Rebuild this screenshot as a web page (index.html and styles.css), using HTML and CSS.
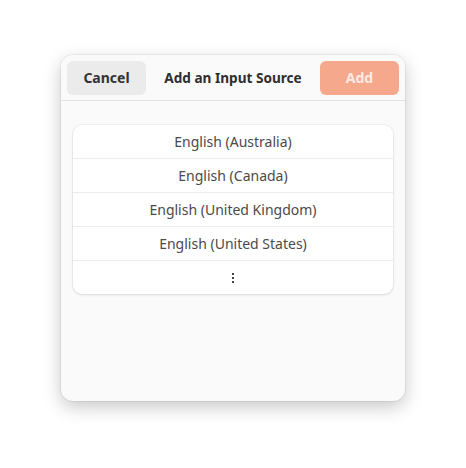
FILE: index.html
```html
<!DOCTYPE html>
<html>
<head>
<meta charset="utf-8">
<link rel="stylesheet" href="styles.css">
</head>
<body>
<div class="dialog">
  <div class="header">
    <button class="btn cancel">Cancel</button>
    <div class="title">Add an Input Source</div>
    <button class="btn add">Add</button>
  </div>
  <div class="content">
    <div class="list">
      <div class="row">English (Australia)</div>
      <div class="row">English (Canada)</div>
      <div class="row">English (United Kingdom)</div>
      <div class="row">English (United States)</div>
      <div class="row more">
        <svg width="4" height="12" viewBox="0 0 4 12"><rect x="1" y="1" width="2" height="2" fill="#444"/><rect x="1" y="5" width="2" height="2" fill="#444"/><rect x="1" y="9" width="2" height="2" fill="#444"/></svg>
      </div>
    </div>
  </div>
</div>
</body>
</html>
```
FILE: styles.css
```css
html, body {
  margin: 0;
  padding: 0;
  background: #ffffff;
}
body {
  font-family: "Noto Sans", "Open Sans", sans-serif;
  color: #3d3d3d;
  padding: 55px 0 0 61px;
  min-height: 468px;
  box-sizing: border-box;
}
.dialog {
  width: 344px;
  height: 346px;
  background: #fafafa;
  border-radius: 12px;
  box-shadow: 0 0 0 1px rgba(0,0,0,0.05), 0 6px 18px rgba(0,0,0,0.22);
  overflow: hidden;
  box-sizing: border-box;
}
.header {
  height: 46px;
  box-sizing: border-box;
  border-bottom: 1px solid #e2e2e2;
  display: flex;
  align-items: center;
  padding: 0 6px;
  justify-content: space-between;
  background: #fafafa;
}
.btn {
  width: 79px;
  height: 34px;
  border: none;
  border-radius: 6px;
  font-family: inherit;
  font-size: 14px;
  font-weight: 700;
  padding: 0;
}
.cancel {
  background: #ebebeb;
  color: #333333;
}
.add {
  background: #f5a88c;
  color: #fcebe4;
}
.title {
  font-size: 13.6px;
  font-weight: 700;
  color: #2e2e2e;
}
.content {
  padding: 24px 12px;
}
.list {
  background: #ffffff;
  border-radius: 9px;
  box-shadow: 0 0 0 1px rgba(0,0,0,0.04), 0 1px 3px rgba(0,0,0,0.1);
  overflow: hidden;
}
.row {
  height: 33px;
  display: flex;
  align-items: center;
  justify-content: center;
  font-size: 14px;
  color: #4a4a4a;
  border-bottom: 1px solid #ececec;
}
.row.more {
  border-bottom: none;
}
```
